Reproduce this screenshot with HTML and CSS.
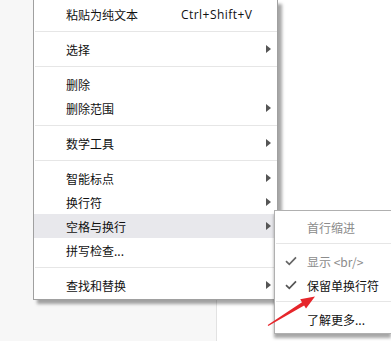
FILE: index.html
```html
<!DOCTYPE html>
<html lang="zh-CN">
<head>
    <meta charset="UTF-8">
    <title>右键菜单</title>
    <link rel="stylesheet" href="styles.css">
</head>
<body>
    <div class="panel"></div>

    <div class="menu">
        <div class="item"><span class="label">粘贴为纯文本</span><span class="shortcut">Ctrl+Shift+V</span></div>
        <div class="sep"></div>
        <div class="item"><span class="label">选择</span><span class="caret"></span></div>
        <div class="sep"></div>
        <div class="item"><span class="label">删除</span></div>
        <div class="item"><span class="label">删除范围</span><span class="caret"></span></div>
        <div class="sep"></div>
        <div class="item"><span class="label">数学工具</span><span class="caret"></span></div>
        <div class="sep"></div>
        <div class="item"><span class="label">智能标点</span><span class="caret"></span></div>
        <div class="item"><span class="label">换行符</span><span class="caret"></span></div>
        <div class="item active"><span class="label">空格与换行</span><span class="caret"></span></div>
        <div class="item"><span class="label">拼写检查...</span></div>
        <div class="sep"></div>
        <div class="item"><span class="label">查找和替换</span><span class="caret"></span></div>
    </div>

    <div class="submenu">
        <div class="sub-item disabled"><span class="check"></span>首行缩进</div>
        <div class="sep"></div>
        <div class="sub-item disabled">
            <span class="check"><svg width="12" height="10" viewBox="0 0 12 10"><path d="M1 5.2 L4.3 8.4 L11 1.4" fill="none" stroke="#666" stroke-width="1.7"/></svg></span>显示 &lt;br/&gt;
        </div>
        <div class="sub-item">
            <span class="check"><svg width="12" height="10" viewBox="0 0 12 10"><path d="M1 5.2 L4.3 8.4 L11 1.4" fill="none" stroke="#555" stroke-width="1.7"/></svg></span>保留单换行符
        </div>
        <div class="sep"></div>
        <div class="sub-item"><span class="check"></span>了解更多...</div>
    </div>

    <!-- red annotation arrow -->
    <svg class="pointer" width="60" height="40" viewBox="262 290 60 40">
        <polygon points="267.7,325.1 302.0,302.2 300.2,299.2 315,296.5 306.0,308.6 304.1,305.6 268.3,325.9" fill="#e6262b"/>
    </svg>
</body>
</html>
```

FILE: styles.css
```css
body {
    margin: 0;
    height: 341px;
    overflow: hidden;
    background-color: #f7f7f7;
    font-family: "Noto Sans CJK SC", sans-serif;
    font-size: 12px;
    color: #111;
}
.panel {
    margin-left: 216px;
    height: 100%;
    background-color: #fff;
    border-left: 1px solid #e2e2e2;
}
.menu {
    position: absolute;
    left: 33px;
    top: 0;
    width: 243px;
    padding: 2px 0 2px;
    background-color: #fff;
    border: 1px solid #a0a0a0;
    border-top: none;
    box-shadow: 4px 4px 3px rgba(0, 0, 0, 0.35);
}
.item {
    display: flex;
    align-items: center;
    height: 24px;
    padding: 0 6px 0 32px;
}
.item.active {
    background-color: #e8e8ec;
}
.label {
    width: 115px;
}
.shortcut {
    flex: 1;
    font-family: "Open Sans", "Noto Sans CJK SC", sans-serif;
    letter-spacing: 0.45px;
}
.caret {
    margin-left: auto;
    width: 0;
    height: 0;
    border-top: 4px solid transparent;
    border-bottom: 4px solid transparent;
    border-left: 5px solid #555;
}
.sep {
    height: 1px;
    margin: 5px 0 5px 1px;
    background-color: #e6e6e6;
}
.submenu {
    position: absolute;
    left: 274px;
    top: 210px;
    width: 116px;
    padding: 4px 0 2px;
    background-color: #fff;
    border: 1px solid #b0b0b0;
    border-right: none;
    box-shadow: 0 4px 3px rgba(0, 0, 0, 0.35);
}
.submenu .sep {
    margin: 4px 0 5px 1px;
}
.sub-item {
    display: flex;
    align-items: center;
    height: 24px;
    padding-left: 10px;
}
.sub-item.disabled {
    color: #8c8c8c;
}
.check {
    display: flex;
    width: 12px;
    margin-right: 10px;
}
.pointer {
    position: absolute;
    left: 262px;
    top: 290px;
}
```
